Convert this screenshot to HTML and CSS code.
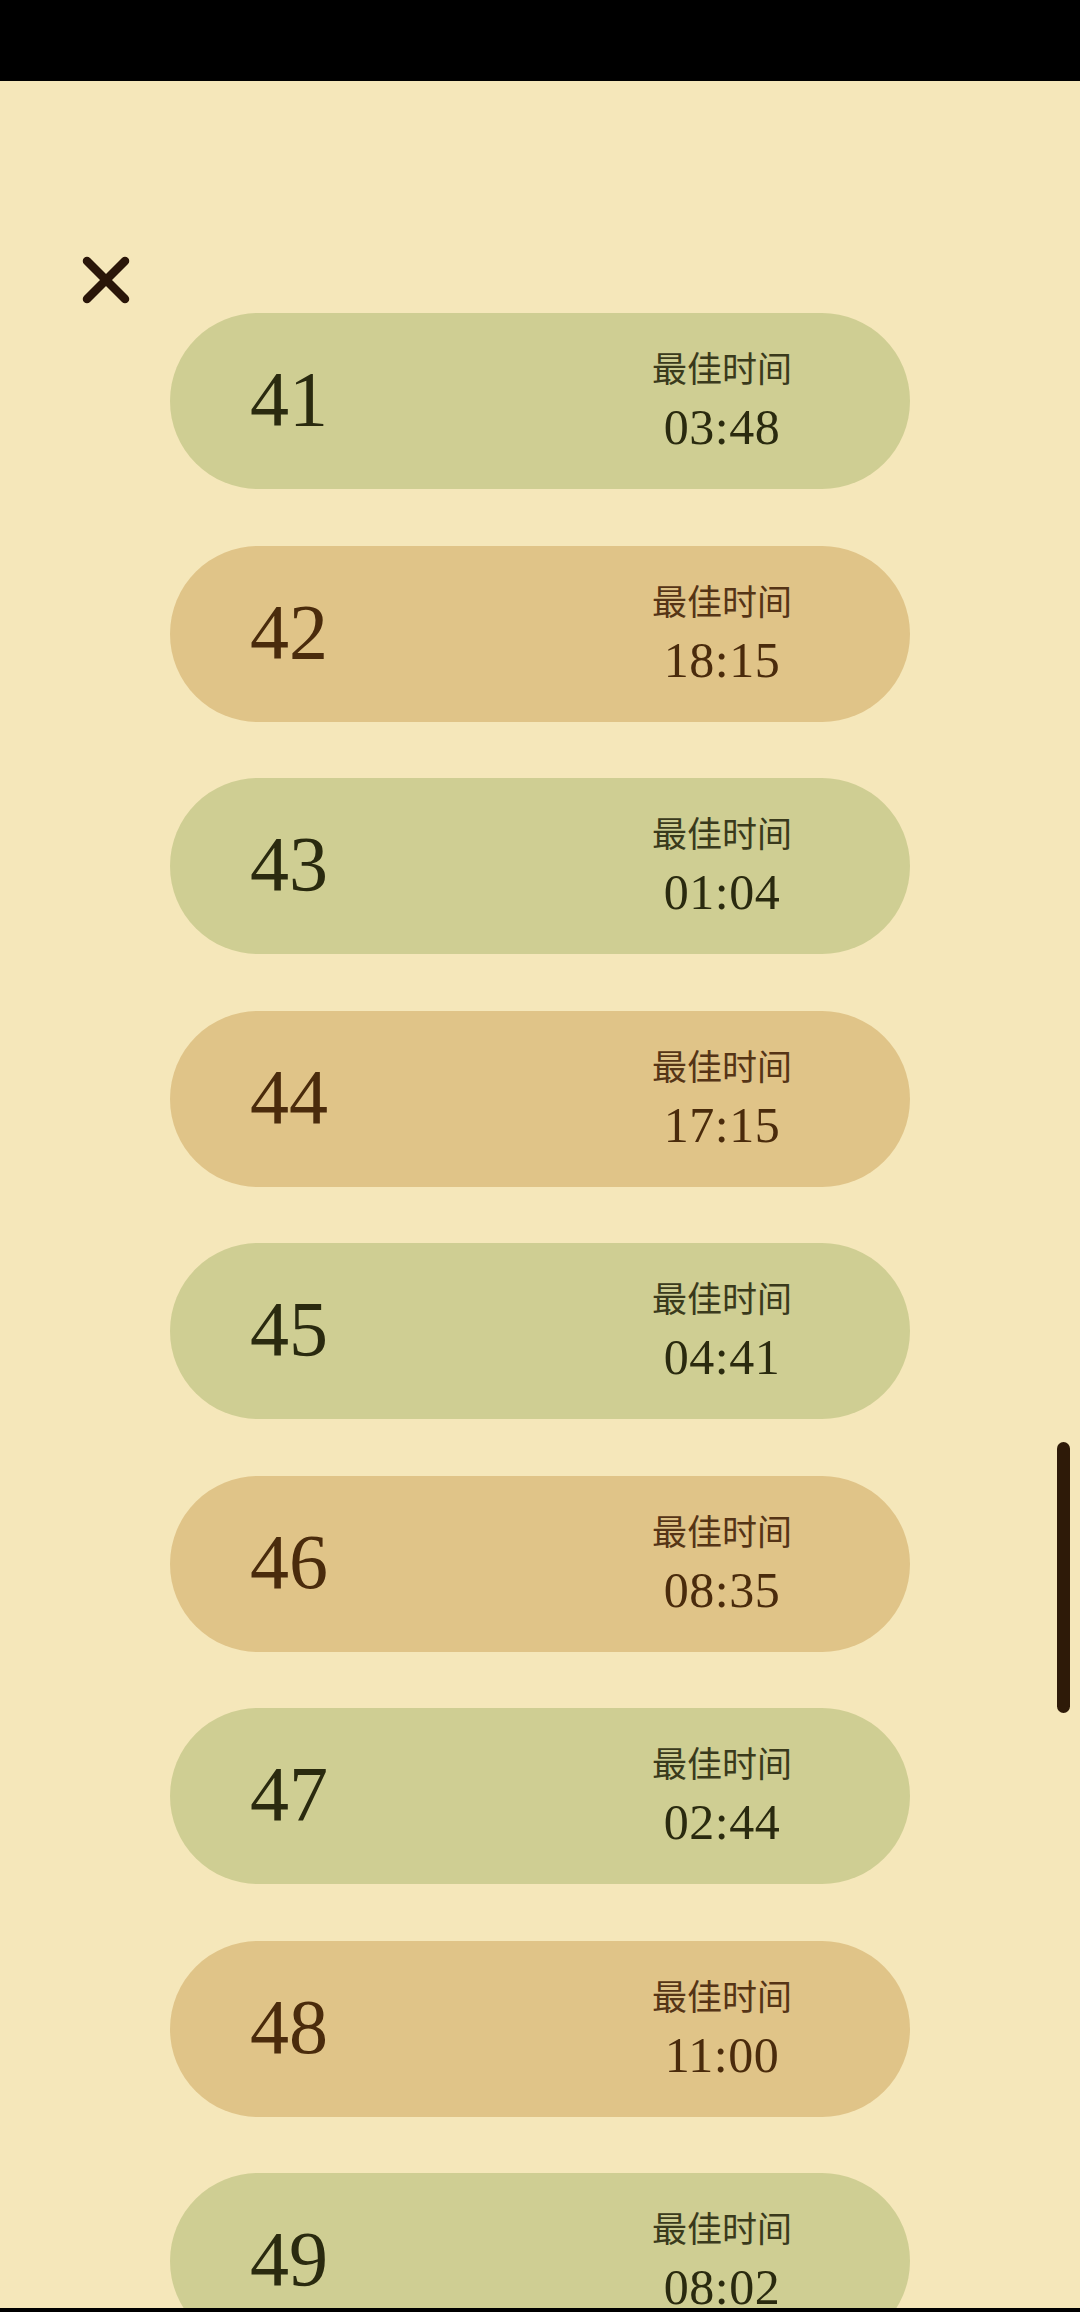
FILE: index.html
```html
<!DOCTYPE html>
<html lang="zh">
<head>
<meta charset="utf-8">
<title>最佳时间</title>
<link rel="stylesheet" href="styles.css">
</head>
<body>
<div class="statusbar"></div>
<header class="header">
  <button class="close" aria-label="关闭">
    <svg viewBox="0 0 48 48" width="48" height="48"><path d="M5 5 L43 43 M43 5 L5 43" stroke="#2a1609" stroke-width="8.5" stroke-linecap="round" fill="none"/></svg>
  </button>
</header>
<main class="list">
  <div class="pill green"><span class="num">41</span><div class="best"><span class="label">最佳时间</span><span class="time">03:48</span></div></div>
  <div class="pill tan"><span class="num">42</span><div class="best"><span class="label">最佳时间</span><span class="time">18:15</span></div></div>
  <div class="pill green"><span class="num">43</span><div class="best"><span class="label">最佳时间</span><span class="time">01:04</span></div></div>
  <div class="pill tan"><span class="num">44</span><div class="best"><span class="label">最佳时间</span><span class="time">17:15</span></div></div>
  <div class="pill green"><span class="num">45</span><div class="best"><span class="label">最佳时间</span><span class="time">04:41</span></div></div>
  <div class="pill tan"><span class="num">46</span><div class="best"><span class="label">最佳时间</span><span class="time">08:35</span></div></div>
  <div class="pill green"><span class="num">47</span><div class="best"><span class="label">最佳时间</span><span class="time">02:44</span></div></div>
  <div class="pill tan"><span class="num">48</span><div class="best"><span class="label">最佳时间</span><span class="time">11:00</span></div></div>
  <div class="pill green"><span class="num">49</span><div class="best"><span class="label">最佳时间</span><span class="time">08:02</span></div></div>
</main>
<div class="scrollbar"></div>
<div class="navbar"></div>
</body>
</html>
```
FILE: styles.css
```css
* { box-sizing: border-box; }
html, body {
  margin: 0;
  padding: 0;
  width: 1080px;
  height: 2312px;
  overflow: hidden;
  background: #f5e7ba;
  font-family: "Liberation Serif", "Noto Sans CJK SC", serif;
}
.statusbar {
  height: 81px;
  background: #000;
}
.header {
  height: 232px;
  padding-top: 175px;
  padding-left: 82px;
}
.close {
  display: block;
  width: 48px;
  height: 48px;
  padding: 0;
  margin: 0;
  border: 0;
  background: none;
}
.close svg { display: block; }
.list {
  display: flex;
  flex-direction: column;
  gap: 56.5px;
  margin-left: 170px;
  width: 740px;
}
.pill {
  flex: none;
  height: 176px;
  border-radius: 88px;
  display: flex;
  align-items: center;
  justify-content: space-between;
  padding-left: 80px;
  padding-right: 98px;
}
.green { background: #cfce93; color: #2a2a0f; }
.tan { background: #e0c488; color: #4a2b0c; }
.green .label { color: #3a3a1c; }
.tan .label { color: #553416; }
.num {
  font-family: "Liberation Serif", serif;
  font-size: 78px;
  line-height: 1;
  padding-bottom: 4px;
}
.best {
  width: 180px;
  display: flex;
  flex-direction: column;
  align-items: center;
  padding-bottom: 2px;
}
.label {
  font-family: "Noto Sans CJK SC", sans-serif;
  font-size: 35px;
  line-height: 44px;
}
.time {
  font-family: "Liberation Serif", serif;
  font-size: 50px;
  line-height: 56px;
  margin-top: 10px;
  letter-spacing: 0.5px;
}
.scrollbar {
  position: fixed;
  left: 1057px;
  top: 1442px;
  width: 13px;
  height: 271px;
  border-radius: 7px;
  background: #2e1a08;
}
.navbar {
  position: fixed;
  left: 0;
  bottom: 0;
  width: 1080px;
  height: 4px;
  background: #000;
}
```
